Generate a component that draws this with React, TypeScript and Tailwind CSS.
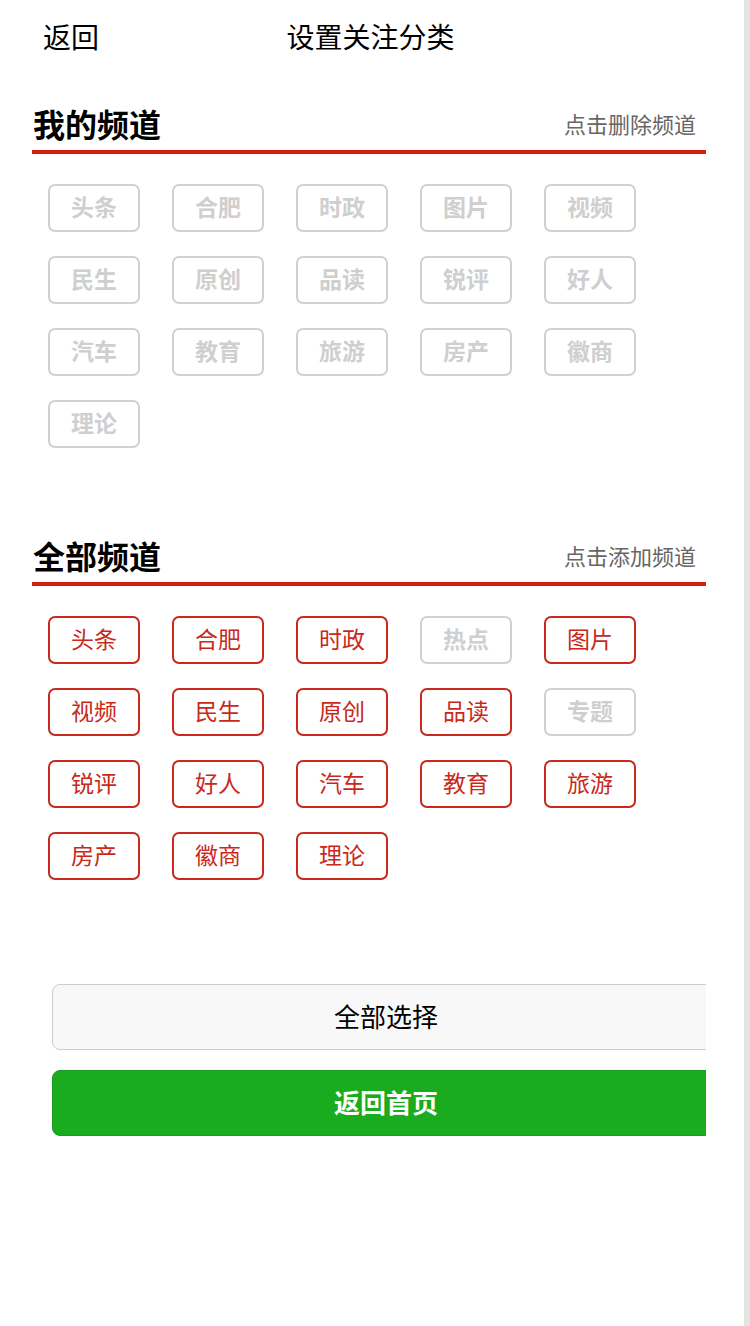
const myChannels = ["头条", "合肥", "时政", "图片", "视频", "民生", "原创", "品读", "锐评", "好人", "汽车", "教育", "旅游", "房产", "徽商", "理论"];

const allChannels: { name: string; on: boolean }[] = [
  { name: "头条", on: true },
  { name: "合肥", on: true },
  { name: "时政", on: true },
  { name: "热点", on: false },
  { name: "图片", on: true },
  { name: "视频", on: true },
  { name: "民生", on: true },
  { name: "原创", on: true },
  { name: "品读", on: true },
  { name: "专题", on: false },
  { name: "锐评", on: true },
  { name: "好人", on: true },
  { name: "汽车", on: true },
  { name: "教育", on: true },
  { name: "旅游", on: true },
  { name: "房产", on: true },
  { name: "徽商", on: true },
  { name: "理论", on: true },
];

function Tag({ name, on }: { name: string; on: boolean }) {
  return (
    <div
      className={
        on
          ? "flex h-[48px] w-[92px] items-center justify-center rounded-[7px] border-2 border-[#c9291b] pb-[3px] text-[23px] text-[#c9291b]"
          : "flex h-[48px] w-[92px] items-center justify-center rounded-[7px] border-2 border-[#d0d0d0] pb-[3px] text-[23px] font-bold text-[#cfcfcf]"
      }
    >
      {name}
    </div>
  );
}

function SectionHead({ title, hint }: { title: string; hint: string }) {
  return (
    <div className="flex h-[54px] items-center justify-between border-b-4 border-[#d0220f] pb-[4px] pr-[10px]">
      <h2 className="pl-px text-[32px] font-bold leading-none text-black">{title}</h2>
      <span className="text-[22px] text-[#666]">{hint}</span>
    </div>
  );
}

export default function App() {
  return (
    <div
      className="flex h-[1326px] w-[750px] bg-white"
      style={{ fontFamily: '"Noto Sans CJK SC", "Noto Sans", sans-serif' }}
    >
      <div className="w-[744px]">
        <header className="grid h-[72px] grid-cols-[1fr_auto_1fr] items-center">
          <span className="pl-[43px] text-[28px] text-black">返回</span>
          <span className="-ml-[3px] text-[28px] text-black">设置关注分类</span>
          <span />
        </header>

        <section className="mt-[28px] pl-[32px] pr-[38px]">
          <SectionHead title="我的频道" hint="点击删除频道" />
          <div className="mt-[30px] grid grid-cols-[repeat(5,92px)] gap-x-[32px] gap-y-[24px] pl-[16px]">
            {myChannels.map((c) => (
              <Tag key={c} name={c} on={false} />
            ))}
          </div>
        </section>

        <section className="mt-[84px] pl-[32px] pr-[38px]">
          <SectionHead title="全部频道" hint="点击添加频道" />
          <div className="mt-[30px] grid grid-cols-[repeat(5,92px)] gap-x-[32px] gap-y-[24px] pl-[16px]">
            {allChannels.map((c) => (
              <Tag key={c.name} name={c.name} on={c.on} />
            ))}
          </div>
        </section>

        <div className="ml-[52px] mr-[38px] mt-[104px] flex flex-col gap-[20px] overflow-hidden">
          <button className="h-[66px] w-[668px] shrink-0 rounded-[8px] border border-[#cdcdcd] bg-[#f8f8f8] pb-[3px] text-[26px] text-black">
            全部选择
          </button>
          <button className="h-[66px] w-[668px] shrink-0 rounded-[8px] border border-[#199c1c] bg-[#1aac1e] pb-[3px] text-[26px] font-bold text-white">
            返回首页
          </button>
        </div>
      </div>
      <div className="h-full w-[6px] bg-[#e4e4e4]" />
    </div>
  );
}
